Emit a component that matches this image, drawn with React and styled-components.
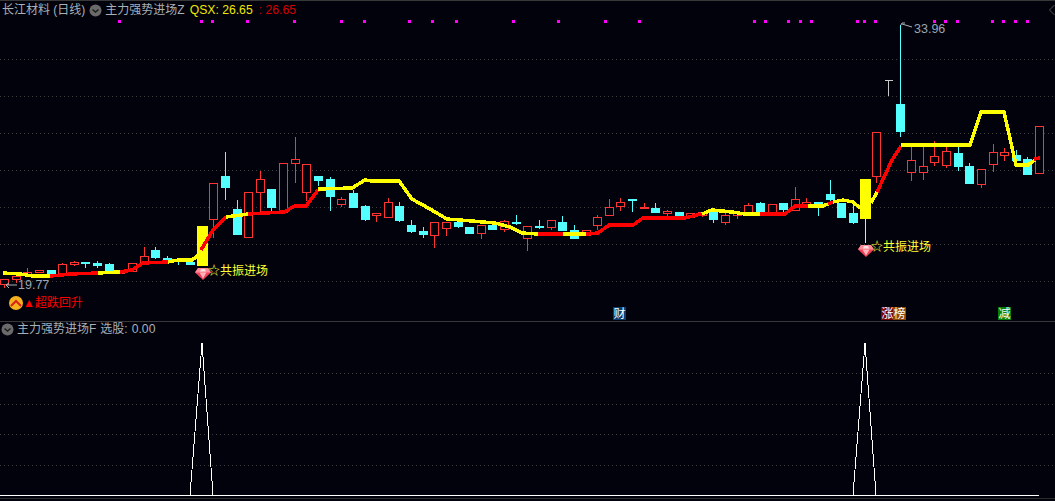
import React from 'react';
import styled, { createGlobalStyle } from 'styled-components';

const GlobalStyle = createGlobalStyle`
  html, body {
    margin: 0;
    padding: 0;
    background: #02020c;
  }
`;

const FONT = '"Liberation Sans", "Noto Sans CJK SC", sans-serif';
const UP = '#ff3333';
const DOWN = '#54ffff';

// top, bottom, wick top, wick bottom, type -- one row per trading day, in page pixels
const CANDLES = [
  [279, 284, 279, 288, 'r'], [276, 279, 276, 283, 'r'], [272, 275, 268, 275, 'r'], [270, 272, 270, 272, 'r'],
  [270, 273, 270, 277, 'c'], [264, 273, 263, 275, 'r'], [262, 264, 261, 266, 'r'], [262, 263, 262, 268, 'c'],
  [263, 265, 261, 268, 'c'], [264, 273, 263, 273, 'c'], [271, 273, 271, 274, 'r'], [263, 271, 263, 272, 'r'],
  [256, 263, 247, 265, 'r'], [250, 257, 247, 259, 'c'], [258, 260, 256, 262, 'c'], [259, 260, 258, 265, 'c'],
  [262, 264, 259, 265, 'c'], [228, 265, 226, 266, 'r'], [183, 219, 183, 238, 'r'], [176, 187, 152, 200, 'c'],
  [209, 234, 200, 234, 'c'], [192, 237, 192, 237, 'r'], [179, 192, 171, 213, 'r'], [189, 207, 189, 213, 'c'],
  [163, 212, 163, 212, 'r'], [159, 163, 137, 183, 'r'], [164, 192, 164, 201, 'r'], [176, 180, 176, 186, 'c'],
  [179, 196, 177, 211, 'c'], [199, 204, 197, 207, 'r'], [193, 207, 190, 208, 'c'], [206, 219, 205, 221, 'c'],
  [213, 215, 213, 222, 'r'], [202, 217, 198, 218, 'r'], [206, 220, 202, 222, 'c'], [225, 231, 220, 233, 'c'],
  [231, 234, 227, 238, 'c'], [222, 235, 222, 248, 'r'], [222, 228, 222, 236, 'r'], [222, 226, 220, 228, 'c'],
  [227, 233, 227, 233, 'c'], [225, 233, 225, 239, 'r'], [225, 229, 222, 230, 'c'], [221, 229, 220, 232, 'r'],
  [222, 223, 215, 225, 'c'], [226, 238, 226, 251, 'r'], [226, 227, 220, 229, 'c'], [220, 227, 220, 230, 'r'],
  [222, 230, 216, 230, 'c'], [230, 238, 225, 238, 'c'], [230, 235, 230, 235, 'r'], [217, 225, 215, 230, 'r'],
  [207, 215, 199, 215, 'r'], [202, 206, 198, 211, 'r'], [199, 200, 199, 212, 'c'], [207, 208, 203, 208, 'r'],
  [208, 212, 203, 213, 'c'], [211, 213, 210, 216, 'r'], [212, 217, 212, 217, 'c'], [213, 217, 213, 217, 'r'],
  [212, 215, 212, 217, 'r'], [211, 219, 211, 223, 'c'], [215, 222, 212, 225, 'r'], [212, 215, 212, 219, 'r'],
  [205, 213, 203, 213, 'r'], [203, 211, 202, 211, 'c'], [204, 212, 204, 214, 'r'], [203, 209, 203, 213, 'c'],
  [199, 210, 187, 211, 'r'], [202, 207, 198, 207, 'r'], [202, 207, 202, 216, 'c'], [194, 199, 180, 202, 'c'],
  [203, 217, 203, 218, 'c'], [213, 222, 203, 224, 'c'], [190, 215, 190, 243, 'y'], [132, 176, 132, 183, 'r'],
  [80, 81, 80, 96, 'g'], [104, 131, 25, 137, 'c'], [160, 172, 145, 181, 'r'], [166, 172, 145, 180, 'r'],
  [156, 162, 141, 166, 'r'], [151, 165, 147, 168, 'r'], [153, 166, 143, 171, 'c'], [166, 183, 163, 183, 'c'],
  [169, 184, 169, 188, 'r'], [152, 164, 144, 172, 'r'], [152, 155, 148, 161, 'r'], [155, 160, 150, 160, 'c'],
  [159, 174, 157, 175, 'c'], [126, 173, 126, 173, 'r'],
];

// the strength line, each run with its own colour
const TREND = [
  ['#ffff00', '3,273 20,274 33,276 50,276'],
  ['#ff0000', '50,276 62,275 70,274 98,273'],
  ['#ffff00', '98,273 120,272'],
  ['#ff0000', '120,272 132,270 143,263 168,262'],
  ['#ffff00', '168,262 178,260 192,260 200,254'],
  ['#ff0000', '201,250 213,230 226,217'],
  ['#ffff00', '226,217 248,214'],
  ['#ff0000', '248,214 284,212 295,206 306,206 318,190'],
  ['#ffff00', '318,189 352,188 365,180 372,181 399,181 412,199 430,209 447,219 460,220 495,223 510,227 522,233 538,234'],
  ['#ff0000', '538,234 563,234'],
  ['#ffff00', '563,234 586,234'],
  ['#ff0000', '586,234 598,233 609,225 633,225 643,218 685,218 697,215 702,214'],
  ['#ffff00', '702,214 712,210 732,212 745,214 760,214'],
  ['#ff0000', '760,214 785,214 795,206 808,206'],
  ['#ffff00', '808,206 823,206 830,203'],
  ['#ff0000', '828,204 833,202'],
  ['#ffff00', '833,202 843,200 853,202 860,208'],
  ['#ffff00', '871,203 877,192'],
  ['#ff0000', '877,192 892,160 901,146'],
  ['#ffff00', '901,145 970,145 981,112 1004,112 1016,165 1028,165 1035,160'],
  ['#ff0000', '1034,159 1040,158'],
];

const SIGNALS = [
  119, 201, 212, 247, 294, 341, 364, 409, 432, 456, 513, 558, 605, 639, 754, 765, 788, 800, 811, 857,
  864, 875, 934, 945, 957, 992, 1003, 1015, 1027,
];

const MAIN_GRID = [59, 96, 133, 170, 207, 244, 281];
const SUB_GRID = [373, 404, 434, 465];

const BADGES = [
  { x: 613, text: '财', fill: '#0b3d6e' },
  { x: 881, text: '涨', fill: '#7a0505' },
  { x: 893, text: '榜', fill: '#8a4a08' },
  { x: 998, text: '减', fill: '#078007' },
];

const Screen = styled.div`
  display: flex;
  flex-direction: column;
  width: 1055px;
  height: 501px;
  overflow: hidden;
  background: #02020c;
  font-family: ${FONT};
`;

const MainPane = styled.section`
  position: relative;
  flex: none;
  height: 321px;
  border-bottom: 1px solid #383838;
  box-shadow: inset 0 1px 0 #383838;
`;

const SubPane = styled.section`
  position: relative;
  flex: none;
  height: 176px;
  border-bottom: 1px solid #2c2c2c;
`;

const Chart = styled.svg`
  display: block;
  width: 1055px;
  height: 100%;
  font-family: ${FONT};
`;

const Legend = styled.div`
  position: absolute;
  top: ${(p) => p.$top}px;
  left: ${(p) => p.$left}px;
  display: flex;
  align-items: center;
  gap: ${(p) => p.$gap}px;
  height: 18px;
  font-size: 12px;
  line-height: 18px;
  white-space: nowrap;
  color: #a8b0b8;
`;

const Value = styled.span`
  font-size: 12.2px;
  color: ${(p) => p.$color || '#a8b0b8'};
  margin-left: ${(p) => p.$gap || 0}px;
`;

const Title = styled.span`
  margin-right: ${(p) => p.$gap || 0}px;
`;

const ChartText = styled.text`
  font-size: ${(p) => p.$size || 12}px;
  fill: ${(p) => p.$color};
`;

const Grid = ({ rows }) =>
  rows.map((y) => (
    <line key={y} x1="0" x2="1055" y1={y + 0.5} y2={y + 0.5} stroke="#3c3c3c" strokeDasharray="1 3" />
  ));

const Candle = ({ index, data }) => {
  const [top, bottom, wickTop, wickBottom, type] = data;
  const x = Math.round(4 + 11.63 * index);
  if (type === 'y') {
    return (
      <g shapeRendering="crispEdges">
        <line x1={x + 0.5} x2={x + 0.5} y1={wickTop} y2={wickBottom} stroke="#e8e88a" />
      </g>
    );
  }
  if (type === 'g') {
    return (
      <g shapeRendering="crispEdges" stroke="#c8c8c8">
        <line x1={x - 3.5} x2={x + 4.5} y1={wickTop + 0.5} y2={wickTop + 0.5} />
        <line x1={x + 0.5} x2={x + 0.5} y1={wickTop} y2={wickBottom} />
      </g>
    );
  }
  const color = type === 'r' ? UP : DOWN;
  return (
    <g shapeRendering="crispEdges">
      <line x1={x + 0.5} x2={x + 0.5} y1={wickTop} y2={top} stroke={color} />
      <line x1={x + 0.5} x2={x + 0.5} y1={bottom} y2={wickBottom} stroke={color} />
      {type === 'r' ? (
        <rect x={x - 3.5} y={top + 0.5} width="8" height={bottom - top} fill="#02020c" stroke={color} />
      ) : (
        <rect x={x - 4} y={top} width="9" height={bottom - top + 1} fill={color} />
      )}
    </g>
  );
};

const Gem = ({ x, y }) => (
  <g transform={`translate(${x} ${y})`}>
    <path d="M3 0h10l3 4.5L8 12 0 4.5z" fill="#f0405a" />
    <path d="M3 0h10l3 4.5H0z" fill="#ff8c98" />
    <path d="M4.5 4.5h7L8 10.5z" fill="#ffb4bc" />
    <path d="M6 1h4l1 2.5H5z" fill="#ffdfe2" />
  </g>
);

const Toggle = () => (
  <svg width="13" height="13" viewBox="0 0 13 13">
    <circle cx="6.5" cy="6.5" r="6" fill="#6a6a6a" />
    <path d="M3.5 5.5l3 2.6 3-2.6" fill="none" stroke="#1c1c1c" strokeWidth="1.4" />
  </svg>
);

const Spike = ({ x }) => (
  <polyline
    points={`${x - 12},495 ${x},343 ${x + 11},495`}
    fill="none"
    stroke="#ffffff"
    shapeRendering="crispEdges"
  />
);

export default function App() {
  return (
    <Screen>
      <GlobalStyle />
      <MainPane>
        <Chart viewBox="0 0 1055 321">
          <Grid rows={MAIN_GRID} />
          {SIGNALS.map((x) => (
            <rect key={x} x={x - 1} y="20" width="3" height="3" fill="#ff00ff" shapeRendering="crispEdges" />
          ))}
          {CANDLES.map((c, i) => (
            <Candle key={i} index={i} data={c} />
          ))}
          <rect x="197" y="226" width="11" height="40" fill="#ffff00" shapeRendering="crispEdges" />
          <rect x="860" y="179" width="11" height="40" fill="#ffff00" shapeRendering="crispEdges" />
          {TREND.map(([color, points], i) => (
            <polyline
              key={i}
              points={points}
              fill="none"
              stroke={color}
              strokeWidth="3.5"
              shapeRendering="crispEdges"
            />
          ))}

          <path d="M1054.5 5l-5 5 5 5" fill="none" stroke="#555555" />

          <path d="M901 25l1-2h3M902 24l10 3" fill="none" stroke="#a8b0b8" />
          <ChartText x="914" y="33" $size={12.5} $color="#9aa6b2">33.96</ChartText>
          <path d="M17 285H6l3-2M6 285l3 3" fill="none" stroke="#a8b0b8" />
          <ChartText x="18" y="289" $size={12.5} $color="#9aa6b2">19.77</ChartText>

          <Gem x={195} y={268} />
          <ChartText x="208" y="275" $color="#ffff33">☆共振进场</ChartText>
          <Gem x={858} y={245} />
          <ChartText x="871" y="251" $color="#ffff33">☆共振进场</ChartText>

          <circle cx="16" cy="303" r="7" fill="#f5b21e" />
          <path d="M11 306l5-5 5 5" fill="none" stroke="#d8231a" strokeWidth="2" />
          <ChartText x="23" y="307" $color="#ff0000">▲超跌回升</ChartText>

          {BADGES.map((b) => (
            <g key={b.x}>
              <rect x={b.x} y="307" width="13" height="13" fill={b.fill} shapeRendering="crispEdges" />
              <ChartText x={b.x + 0.5} y="318" $color="#ffffff">{b.text}</ChartText>
            </g>
          ))}
        </Chart>
        <Legend $top={1} $left={2} $gap={3}>
          <Title $gap={1}>长江材料 (日线)</Title>
          <Toggle />
          <Title>主力强势进场Z</Title>
          <Value $color="#f0e800" $gap={2}>QSX: 26.65</Value>
          <Value $color="#d80000" $gap={3}>: 26.65</Value>
        </Legend>
      </MainPane>
      <SubPane>
        <Chart viewBox="0 322 1055 176">
          <Grid rows={SUB_GRID} />
          <line x1="0" x2="1039" y1="495.5" y2="495.5" stroke="#ffffff" shapeRendering="crispEdges" />
          <Spike x={202} />
          <Spike x={865} />
        </Chart>
        <Legend $top={-2} $left={1} $gap={3}>
          <Toggle />
          <Title $gap={1}>主力强势进场F</Title>
          <Title>选股:</Title>
          <Value $gap={1}>0.00</Value>
        </Legend>
      </SubPane>
    </Screen>
  );
}
